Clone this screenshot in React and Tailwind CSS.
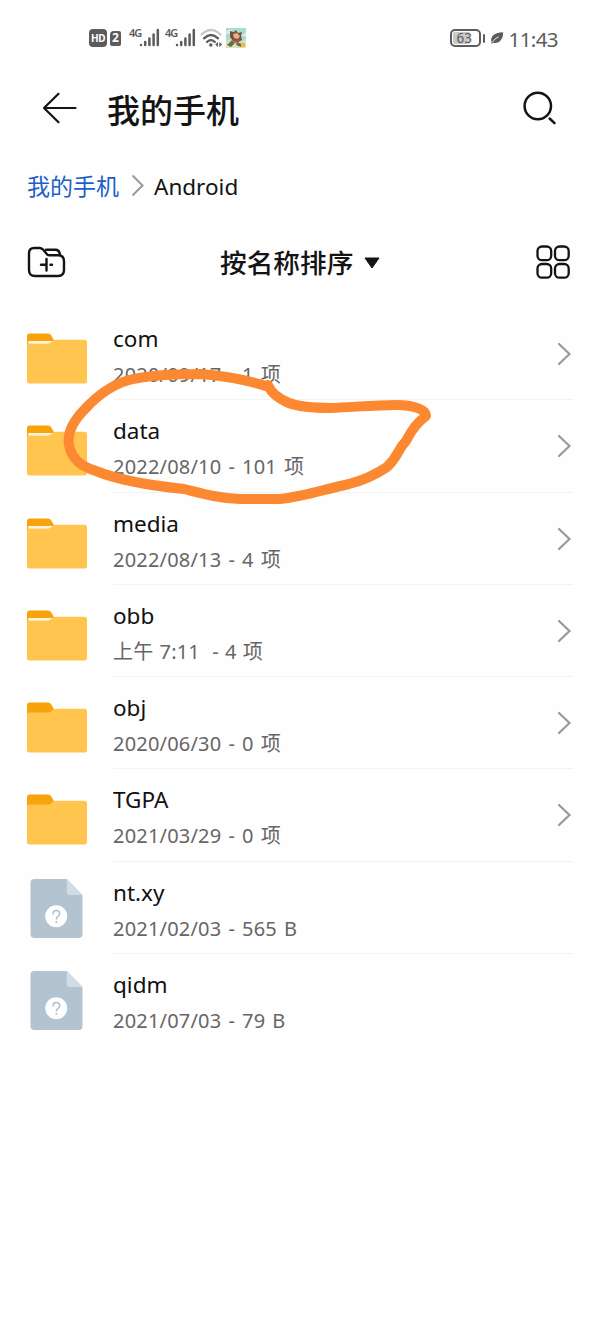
const files = [
  { name: 'com', info: '2020/09/17 - 1 项', type: 'folder', filled: true },
  { name: 'data', info: '2022/08/10 - 101 项', type: 'folder', filled: true },
  { name: 'media', info: '2022/08/13 - 4 项', type: 'folder', filled: true },
  { name: 'obb', info: '上午 7:11  - 4 项', type: 'folder', filled: true, compact: true },
  { name: 'obj', info: '2020/06/30 - 0 项', type: 'folder' },
  { name: 'TGPA', info: '2021/03/29 - 0 项', type: 'folder' },
  { name: 'nt.xy', info: '2021/02/03 - 565 B', type: 'file' },
  { name: 'qidm', info: '2021/07/03 - 79 B', type: 'file' },
];

function FolderIcon({ filled }) {
  return (
    <svg width="62" height="52" viewBox="0 0 62 52">
      <path d="M1 12V3Q1 .5 3.500 .5H22q2 0 3 1.500L28.500 8v7H1z" fill="#f7a30c" />
      <path d="M1 48V12q0-1.500 2-1.500h19q2 0 3.500-1.500l1.500-1.500q1-.800 3-.800h28.500q2.500 0 2.500 2.500V48q0 2.500-2.500 2.500h-55Q1 50.500 1 48z" fill="#ffc54f" />
      {filled && <path d="M2.200 8h24.500L25.500 9q-1.500 1.800-3.500 1.800H2.200z" fill="#fff5dc" />}
    </svg>
  );
}

function FileIcon() {
  return (
    <svg width="62" height="62" viewBox="0 0 62 62">
      <path d="M4.500 5q0-4 4-4h32.300L56.500 17v39q0 4-4 4h-44q-4 0-4-4z" fill="#b3c3d0" />
      <path d="M40.800 1 56.500 17H44.500q-3.700 0-3.700-3.700z" fill="#d1dde5" />
      <circle cx="30.200" cy="38.300" r="11" fill="#fff" />
      <path d="M27 36.100q0-3.500 3.400-3.500 3.300 0 3.300 3 0 1.600-1.600 2.700-1.700 1.200-1.700 2.700" fill="none" stroke="#aec0cf" strokeWidth="1.500" strokeLinecap="round" />
      <circle cx="30.400" cy="44" r="1" fill="#aec0cf" />
    </svg>
  );
}

function Signal() {
  return (
    <div className="flex h-5 w-[31px]">
      <span className="-mt-px w-[10px] text-[11px] leading-[12px] font-semibold tracking-[-1px]">4G</span>
      <svg width="21" height="20" viewBox="0 0 21 20" fill="none" stroke="#5c5c5c" strokeWidth="2.500" strokeLinecap="round">
        <path d="M2 17v0M6.200 17v-3M10.400 17v-6.500M14.600 17V6.500M18.800 17V2" />
      </svg>
    </div>
  );
}

function StatusBar() {
  return (
    <div className="flex h-[76px] items-center justify-between pr-[42px] pl-[89px] text-[#5c5c5c]">
      <div className="flex items-center">
        <span className="flex h-[18px] w-[18px] items-center justify-center rounded-[4px] bg-[#5c5c5c] text-[10px] font-bold tracking-[-0.5px] text-white">HD</span>
        <span className="ml-[3px] flex h-[15px] w-[11px] items-center justify-center rounded-[2px] rounded-tl-[4px] bg-[#5c5c5c] text-[12px] font-bold text-white">2</span>
        <div className="ml-[8px] flex gap-[5px]">
          <Signal />
          <Signal />
        </div>
        <svg className="ml-[4px]" width="23" height="20" viewBox="0 0 23 20" fill="none" strokeLinecap="round">
          <path d="M1.500 6.500Q11 -2.500 20.500 6.500" stroke="#c9c9c9" strokeWidth="2.200" />
          <path d="M4 10.300Q11 3.600 18 10.300M7 14Q11 10.300 14.800 14" stroke="#5c5c5c" strokeWidth="2.300" />
          <circle cx="10.800" cy="17" r="1.700" fill="#5c5c5c" />
          <path d="m18 14-2.800 2.500L18 19zM19.300 14l2.800 2.500-2.800 2.500z" fill="#5c5c5c" />
        </svg>
        <svg className="ml-[3px]" width="20" height="20" viewBox="0 0 20 20">
          <path d="M0 0h20v20H0z" fill="#a5dcd8" />
          <path d="M0 13q5-3 9 0t11-2v9H0z" fill="#e4dfae" />
          <path d="M0 3q4-3 7 0t5-1v4H0zM14 7l6-2v4z" fill="#d5ece1" />
          <path d="M4 3l4 1 2-2 2 3 4-1-1 4 1 4-4 2-5-1-3-4z" fill="#75523a" />
          <path d="M7 6l4-1 3 3-2 3-4-1z" fill="#e6b184" />
          <path d="M7 11l4 1 3-1-1 3-4 1z" fill="#bd4938" />
          <path d="M1 17l5-5 3 3-4 4zM11 14l5 2-1 3-5-2z" fill="#59705a" />
          <circle cx="17" cy="17" r="2.300" fill="#eeb84f" />
        </svg>
      </div>
      <div className="flex items-center">
        <span className="flex h-[18px] w-[31px] rounded-[5px] border-2 border-[#5c5c5c] p-px">
          <span className="flex w-[17px] items-center rounded-[2px] bg-[#c9c9c9] pt-px pl-[4px] text-[13.500px] leading-none">63</span>
        </span>
        <span className="ml-[2px] h-[9px] w-[2px] rounded-full bg-[#5c5c5c]" />
        <svg className="ml-[5px]" width="14" height="14" viewBox="0 0 15 14">
          <path d="M1.500 11.500C0 5 5 1 14 .8 14.500 8 9.500 13.800 3.500 12L1.300 13.500z" fill="#5c5c5c" />
          <path d="M2 12Q5 7.500 9.500 5.500" fill="none" stroke="#fff" strokeWidth=".9" />
        </svg>
        <span className="ml-[5px] pt-[2px] text-[20.500px] leading-none tracking-[-0.6px]">11:43</span>
      </div>
    </div>
  );
}

export default function App() {
  return (
    <div className="relative min-h-[1333px] w-[600px] overflow-hidden bg-[#fefefe] font-['Noto_Sans','Noto_Sans_CJK_SC',sans-serif] text-[#141414]">
      <StatusBar />

      {/* Header */}
      <div className="flex h-16 items-center pr-[43px] pl-[42px]">
        <svg width="36" height="32" viewBox="0 0 36 32" fill="none" stroke="#141414" strokeWidth="2.200" strokeLinecap="round" strokeLinejoin="round">
          <path d="M33.500 16H2M16.500 1.800 2 16l14.500 14.200" />
        </svg>
        <h1 className="ml-[29px] flex-1 pt-[4px] text-[33px] leading-none font-medium">我的手机</h1>
        <svg width="34" height="34" viewBox="0 0 34 34" fill="none" stroke="#141414" strokeWidth="2.500" strokeLinecap="round">
          <circle cx="14.800" cy="15" r="13.200" />
          <path d="m26.600 27.500 4.900 4.700" />
        </svg>
      </div>

      {/* Breadcrumb */}
      <div className="flex h-[92px] items-center pl-[27px] text-[22.500px] leading-none">
        <span className="text-[23px] text-[#1c5fcb]">我的手机</span>
        <svg className="mr-[9px] ml-[12px]" width="14" height="24" viewBox="0 0 14 24" fill="none" stroke="#999" strokeWidth="2">
          <path d="m1.500 1.500 10 10-10 10" />
        </svg>
        <span className="pt-[2px]">Android</span>
      </div>

      {/* Toolbar */}
      <div className="flex h-[60px] items-center pr-[29px] pl-[27px]">
        <svg width="40" height="32" viewBox="0 0 40 32" fill="none" stroke="#141414" strokeWidth="2.400" strokeLinecap="round" strokeLinejoin="round">
          <path d="M7 2h5.500q2 0 3.300 1.300l4.200 5q1 1 2.800 1H31q6 0 6 6V24q0 6-6 6H8q-6 0-6-6V7q0-5 5-5z" />
          <path d="M19 3.700h9.500q3.500 0 4.500 4.500M19.500 13v11.500M14 18.800h5.500M23.500 18.800H25" />
        </svg>
        <div className="flex flex-1 items-center pt-[3px] pl-[153px]">
          <span className="text-[26.700px] leading-none font-medium">按名称排序</span>
          <svg className="ml-[11px]" width="16" height="12" viewBox="0 0 16 12">
            <path d="M1 1h14L8 11z" fill="#141414" stroke="#141414" strokeLinejoin="round" />
          </svg>
        </div>
        <svg width="35" height="35" viewBox="0 0 35 35" fill="none" stroke="#141414" strokeWidth="2.300">
          <rect x="1.500" y="1.500" width="13.700" height="13.700" rx="4.500" />
          <rect x="19" y="1.500" width="13.700" height="13.700" rx="4.500" />
          <rect x="1.500" y="19" width="13.700" height="13.700" rx="4.500" />
          <rect x="19" y="19" width="13.700" height="13.700" rx="4.500" />
        </svg>
      </div>

      {/* File list */}
      <ul className="mt-[16px] pl-[26px]">
        {files.map((file, index) => (
          <li key={file.name} className="flex h-[92.250px]">
            <div className={file.type === 'folder' ? 'w-[87px] pt-[25px]' : 'w-[87px] pt-[16px]'}>
              {file.type === 'folder' ? <FolderIcon filled={file.filled} /> : <FileIcon />}
            </div>
            <div className={`mr-[27px] flex flex-1 justify-between ${index < files.length - 1 ? 'border-b border-[#f2f2f2]' : ''}`}>
              <div className="pt-[16px]">
                <div className="h-[36px] text-[22.500px] leading-[30px] text-[#111]">{file.name}</div>
                <div className={`text-[20px] leading-[30px] tracking-[0.2px] whitespace-pre text-[#666] ${file.compact ? '[word-spacing:0.700px]' : '[word-spacing:1.600px]'}`}>
                  {file.info}
                </div>
              </div>
              {file.type === 'folder' && (
                <svg className="mt-[34px] mr-px" width="15" height="24" viewBox="0 0 15 24" fill="none" stroke="#999" strokeWidth="2.200" strokeLinecap="round">
                  <path d="m2 2 10.500 10L2 22" />
                </svg>
              )}
            </div>
          </li>
        ))}
      </ul>

      {/* Hand-drawn marker around the data folder */}
      <svg className="pointer-events-none absolute top-[360px] left-[50px]" width="400" height="160" viewBox="50 360 400 160" fill="none">
        <path
          d="M269 387C245 379 225 376 201 374C170 374 145 376 129 380C111 385 96 397 85 409C73 421 67 433 69 445C72 459 80 466 96 471C118 480 145 485 184 489C204 494 218 498 240 499H280C302 497 322 490 349 484C365 480 378 473 387 467C399 456 397 450 406 441C411 431 416 423 426 416C426 409 412 405 397 405C375 405 355 407 331 408C313 408 299 407 289 403C277 398 271 393 268 385"
          stroke="#fc8832"
          strokeWidth="10"
          strokeLinecap="round"
          strokeLinejoin="round"
        />
      </svg>
    </div>
  );
}
